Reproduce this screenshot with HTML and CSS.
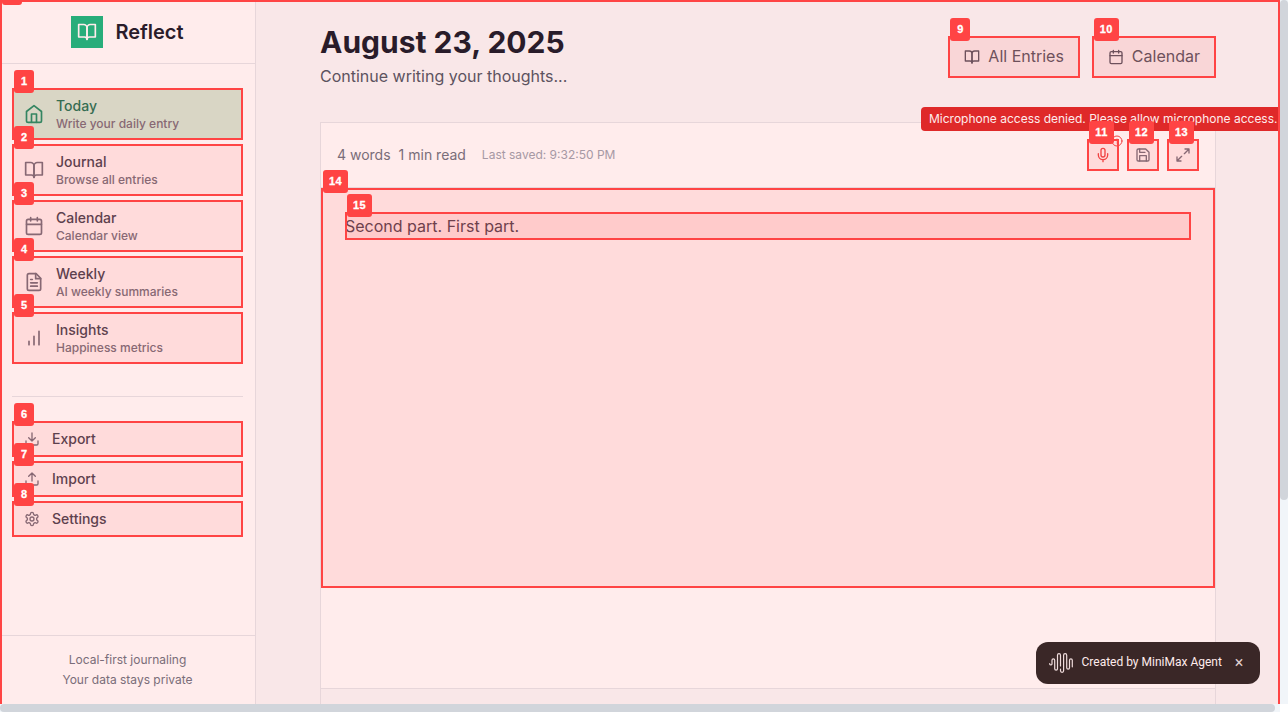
FILE: index.html
```html
<!DOCTYPE html>
<html lang="en">
<head>
<meta charset="utf-8">
<title>Reflect</title>
<link rel="stylesheet" href="styles.css">
</head>
<body>
<svg class="sprite" aria-hidden="true">
  <symbol id="book" viewBox="0 0 24 24"><path d="M2 3h6a4 4 0 0 1 4 4v14a3 3 0 0 0-3-3H2z"/><path d="M22 3h-6a4 4 0 0 0-4 4v14a3 3 0 0 1 3-3h7z"/></symbol>
  <symbol id="home" viewBox="0 0 24 24"><path d="m3 9 9-7 9 7v11a2 2 0 0 1-2 2H5a2 2 0 0 1-2-2z"/><path d="M9 22V12h6v10"/></symbol>
  <symbol id="calendar" viewBox="0 0 24 24"><path d="M8 2v4M16 2v4M3 10h18"/><rect x="3" y="4" width="18" height="18" rx="2"/></symbol>
  <symbol id="file" viewBox="0 0 24 24"><path d="M14.500 2H6a2 2 0 0 0-2 2v16a2 2 0 0 0 2 2h12a2 2 0 0 0 2-2V7.500L14.500 2z"/><path d="M14 2v6h6M10 9H8M16 13H8M16 17H8"/></symbol>
  <symbol id="chart" viewBox="0 0 24 24"><path d="M12 20V10M18 20V4M6 20v-4"/></symbol>
  <symbol id="download" viewBox="0 0 24 24"><path d="M12 15V3M21 15v4a2 2 0 0 1-2 2H5a2 2 0 0 1-2-2v-4M7 10l5 5 5-5"/></symbol>
  <symbol id="upload" viewBox="0 0 24 24"><path d="M12 3v12M17 8l-5-5-5 5M21 15v4a2 2 0 0 1-2 2H5a2 2 0 0 1-2-2v-4"/></symbol>
  <symbol id="gear" viewBox="0 0 24 24"><path d="M12.22 2h-.44a2 2 0 0 0-2 2v.18a2 2 0 0 1-1 1.73l-.43.25a2 2 0 0 1-2 0l-.15-.08a2 2 0 0 0-2.73.73l-.22.38a2 2 0 0 0 .73 2.73l.15.1a2 2 0 0 1 1 1.72v.51a2 2 0 0 1-1 1.74l-.15.09a2 2 0 0 0-.73 2.73l.22.38a2 2 0 0 0 2.73.73l.15-.08a2 2 0 0 1 2 0l.43.25a2 2 0 0 1 1 1.73V20a2 2 0 0 0 2 2h.44a2 2 0 0 0 2-2v-.18a2 2 0 0 1 1-1.73l.43-.25a2 2 0 0 1 2 0l.15.08a2 2 0 0 0 2.73-.73l.22-.39a2 2 0 0 0-.73-2.73l-.15-.08a2 2 0 0 1-1-1.74v-.5a2 2 0 0 1 1-1.74l.15-.09a2 2 0 0 0 .73-2.73l-.22-.38a2 2 0 0 0-2.73-.73l-.15.08a2 2 0 0 1-2 0l-.43-.25a2 2 0 0 1-1-1.73V4a2 2 0 0 0-2-2z"/><circle cx="12" cy="12" r="3"/></symbol>
  <symbol id="mic" viewBox="0 0 24 24"><path d="M12 19v3M19 10v2a7 7 0 0 1-14 0v-2"/><rect x="9" y="2" width="6" height="13" rx="3"/></symbol>
  <symbol id="save" viewBox="0 0 24 24"><path d="M19 21H5a2 2 0 0 1-2-2V5a2 2 0 0 1 2-2h11l5 5v11a2 2 0 0 1-2 2z"/><path d="M17 21v-8H7v8M7 3v5h8"/></symbol>
  <symbol id="expand" viewBox="0 0 24 24"><path d="M15 3h6v6M21 3l-7 7M3 21l7-7M9 21H3v-6"/></symbol>
  <symbol id="alert" viewBox="0 0 24 24"><circle cx="12" cy="12" r="10"/><path d="M12 8v4M12 16h.01"/></symbol>
  <symbol id="wave" viewBox="0 0 24 20"><path d="M.7 10.500v.6a1.200 1.200 0 0 0 2.300 0V7.300a1.300 1.300 0 0 1 2.700 0v8.500a1.400 1.400 0 0 0 2.800 0V2.200a1.500 1.500 0 0 1 3 0V13M11.500 16v1.800a1.500 1.500 0 0 0 3.100 0V2.200a1.500 1.500 0 0 1 3.100 0v12.600a1.400 1.400 0 0 0 2.800 0V7.300a1.400 1.400 0 0 1 2.800 0v6.500"/></symbol>
</svg>
<div class="viewport">
  <div class="app mark mark-root"><span class="tag"></span>
    <aside class="sidebar">
      <div class="brand"><span class="logo"><svg class="icon i20"><use href="#book"/></svg></span><span class="brand-name">Reflect</span></div>
      <nav class="nav">
        <a class="nav-item active mark"><span class="tag">1</span><svg class="icon i20"><use href="#home"/></svg><span class="nav-text"><b>Today</b><small>Write your daily entry</small></span></a>
        <a class="nav-item mark"><span class="tag">2</span><svg class="icon i20"><use href="#book"/></svg><span class="nav-text"><b>Journal</b><small>Browse all entries</small></span></a>
        <a class="nav-item mark"><span class="tag">3</span><svg class="icon i20"><use href="#calendar"/></svg><span class="nav-text"><b>Calendar</b><small>Calendar view</small></span></a>
        <a class="nav-item mark"><span class="tag">4</span><svg class="icon i20"><use href="#file"/></svg><span class="nav-text"><b>Weekly</b><small>AI weekly summaries</small></span></a>
        <a class="nav-item mark"><span class="tag">5</span><svg class="icon i20"><use href="#chart"/></svg><span class="nav-text"><b>Insights</b><small>Happiness metrics</small></span></a>
      </nav>
      <div class="tools">
        <a class="tool mark"><span class="tag">6</span><svg class="icon i16"><use href="#download"/></svg>Export</a>
        <a class="tool mark"><span class="tag">7</span><svg class="icon i16"><use href="#upload"/></svg>Import</a>
        <a class="tool mark"><span class="tag">8</span><svg class="icon i16"><use href="#gear"/></svg>Settings</a>
      </div>
      <footer class="side-foot"><p>Local-first journaling</p><p>Your data stays private</p></footer>
    </aside>
    <main class="main">
      <header class="head">
        <div><h1>August 23, 2025</h1><p class="sub">Continue writing your thoughts...</p></div>
        <div class="head-actions">
          <a class="btn mark"><span class="tag">9</span><svg class="icon i16"><use href="#book"/></svg><span class="btn-label">All Entries</span></a>
          <a class="btn mark"><span class="tag two">10</span><svg class="icon i16"><use href="#calendar"/></svg><span class="btn-label">Calendar</span></a>
        </div>
      </header>
      <section class="card">
        <div class="bar">
          <span class="count">4 words</span><span class="count read">1 min read</span><span class="saved">Last saved: 9:32:50 PM</span>
          <div class="bar-actions">
            <div class="toast">Microphone access denied. Please allow microphone access.</div>
            <svg class="icon alert"><use href="#alert"/></svg>
            <a class="sq mic mark"><span class="tag two">11</span><svg class="icon i16"><use href="#mic"/></svg></a>
            <a class="sq mark"><span class="tag two">12</span><svg class="icon i16"><use href="#save"/></svg></a>
            <a class="sq mark"><span class="tag two">13</span><svg class="icon i16"><use href="#expand"/></svg></a>
          </div>
        </div>
        <div class="editor mark"><span class="tag two">14</span><p class="line mark"><span class="tag two">15</span>Second part. First part.</p></div>
        <div class="card-foot"></div>
      </section>
    </main>
    <div class="badge"><svg class="wave"><use href="#wave"/></svg><span class="credit">Created by MiniMax Agent</span><span class="close">×</span></div>
  </div>
  <div class="vbar"><div class="vthumb"></div></div>
  <div class="hbar"><div class="hthumb"></div></div>
</div>
</body>
</html>
```
FILE: styles.css
```css
* { box-sizing: border-box; }
body { margin: 0; overflow: hidden; font-family: Inter, sans-serif; color: #111827; }
h1, p { margin: 0; }
.sprite { display: none; }
.viewport { width: 1288px; height: 712px; display: grid; grid-template: 704px 8px / 1280px 8px; background: #fff; overflow: hidden; }
.app { display: flex; overflow: hidden; background: #f9fafb; }

.icon { fill: none; stroke: currentColor; stroke-width: 2; stroke-linecap: round; stroke-linejoin: round; flex: none; }
.i20 { width: 20px; height: 20px; }
.i16 { width: 16px; height: 16px; }

/* Numbered element outlines */
.mark { position: relative; }
.mark::after { content: ""; position: absolute; inset: 0; border: 2px solid #f44; background: rgba(255, 68, 68, .1); pointer-events: none; z-index: 5; }
.mark-root::after { border-bottom: 0; z-index: 3; }
.tag { position: absolute; z-index: 8; top: -18px; left: 2px; width: 20px; height: 23px; border-radius: 3px; background: #f44; color: #fff; font: bold 11px/22px "Liberation Sans", Arial, sans-serif; text-align: center; -webkit-text-stroke: .3px #fff; }
.tag.two { width: 25px; letter-spacing: .4px; }

.sidebar { width: 256px; display: flex; flex-direction: column; background: #fff; border-right: 1px solid #e5e7eb; }
.brand { height: 64px; display: flex; align-items: center; justify-content: center; gap: 12px; border-bottom: 1px solid #e5e7eb; }
.logo { width: 32px; height: 32px; display: grid; place-items: center; background: #10b981; color: #fff; }
.brand-name { font-size: 20px; font-weight: 600; line-height: 28px; }
.nav { display: flex; flex-direction: column; gap: 4px; padding: 24px 12px 0; }
.nav-item { height: 52px; display: flex; align-items: center; gap: 12px; padding: 0 12px; color: #6b7280; }
.nav-text { display: flex; flex-direction: column; }
.nav-text b { font-size: 14px; font-weight: 500; line-height: 20px; color: #374151; }
.nav-text small { font-size: 12px; font-weight: 500; line-height: 16px; color: #6b7280; }
.active { background: #d1fae5; color: #059669; }
.active .nav-text b { color: #047857; }
.tools { margin: 32px 12px 0; padding-top: 24px; border-top: 1px solid #e5e7eb; display: flex; flex-direction: column; gap: 4px; }
.tool { height: 36px; display: flex; align-items: center; gap: 12px; padding: 0 12px; font-size: 14px; line-height: 20px; font-weight: 500; color: #374151; }
.tool .icon { color: #6b7280; }
.side-foot { margin-top: auto; height: 69px; padding-top: 16px; border-top: 1px solid #e5e7eb; text-align: center; font-size: 12px; line-height: 16px; color: #6b7280; }
.side-foot p + p { margin-top: 4px; }

.main { width: 896px; margin-left: 64px; padding-top: 24px; }
.head { height: 98px; display: flex; justify-content: space-between; }
h1 { font-size: 30px; font-weight: 700; line-height: 36px; }
.sub { margin-top: 4px; font-size: 16px; line-height: 24px; color: #4b5563; }
.head-actions { display: flex; gap: 12px; padding-top: 12px; }
.btn { height: 42px; padding: 0 16px; display: flex; align-items: center; gap: 8px; font-size: 16px; line-height: 24px; color: #4b5563; }
.btn-label { padding-bottom: 2px; }
.card { height: 700px; background: #fff; border: 1px solid #e5e7eb; }
.bar { height: 65px; padding: 0 16px; display: flex; align-items: center; border-bottom: 1px solid #e5e7eb; }
.count { font-size: 14px; line-height: 20px; color: #6b7280; }
.read { margin-left: 8px; }
.saved { margin-left: 16px; font-size: 12px; line-height: 16px; color: #9ca3af; }
.bar-actions { position: relative; margin-left: auto; display: flex; gap: 8px; }
.sq { width: 32px; height: 32px; display: grid; place-items: center; color: #6b7280; }
.mic { color: #ef4444; }
.toast { position: absolute; z-index: 1; right: -86.5px; top: -32px; height: 24px; padding: 4px 8px; border-radius: 4px; background: #dc2626; color: #fff; font-size: 12px; line-height: 16px; white-space: nowrap; }
.alert { position: absolute; top: -4px; left: 24px; width: 12px; height: 12px; color: #ef4444; }
.editor { height: 400px; padding: 24px; }
.line { height: 28px; font-size: 16px; line-height: 28px; color: #374151; }
.card-foot { margin-top: 100px; height: 134px; background: #f9fafb; border-top: 1px solid #e5e7eb; }

.badge { position: absolute; z-index: 2; left: 1036px; top: 642px; width: 224px; height: 42px; padding: 0 14px 0 13px; display: flex; align-items: center; border-radius: 12px; background: #242424; color: #fff; font: 12px/16px Roboto, sans-serif; }
.wave { width: 24px; height: 20px; margin-right: 8.5px; fill: none; stroke: #eee; stroke-width: 1.2; stroke-linecap: round; }
.credit { padding-bottom: 2px; }
.close { margin-left: auto; width: 14px; text-align: center; font-size: 16px; color: #ddd; }

.vbar { background: #f1f5f9; }
.vthumb { height: 500px; border-radius: 4px; background: #d1d5db; }
.hbar { background: #f1f5f9; }
.hthumb { width: 1275px; height: 8px; border-radius: 4px; background: #d1d5db; }
```
